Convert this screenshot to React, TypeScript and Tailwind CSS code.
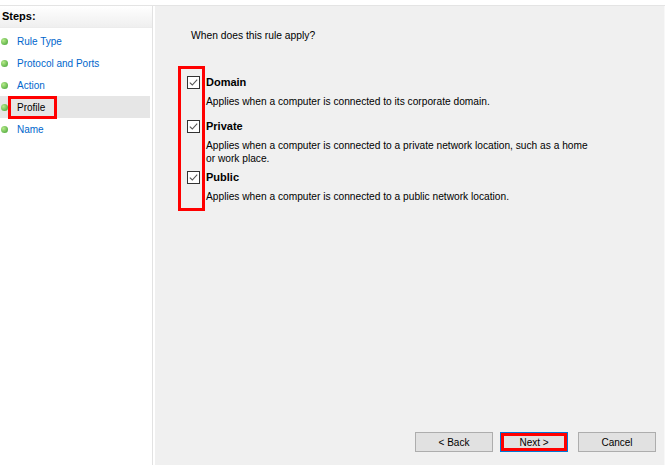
import React from 'react'

const steps = ['Rule Type', 'Protocol and Ports', 'Action', 'Profile', 'Name']

function CheckBox() {
  return (
    <span className="w-[13px] h-[13px] border border-[#333333] bg-white flex items-center justify-center shrink-0">
      <svg width="11" height="11" viewBox="0 0 11 11">
        <path d="M1.8 5.6 L4.3 8 L9.2 2.6" fill="none" stroke="#555555" strokeWidth="1.1" />
      </svg>
    </span>
  )
}

function Option({ label, lines, className }: { label: string; lines: string[]; className?: string }) {
  return (
    <div className={`flex items-start gap-[6px] ${className ?? ''}`}>
      <div className="h-[13px] flex items-center">
        <CheckBox />
      </div>
      <div>
        <p className="font-bold text-[11px] leading-[13px]">{label}</p>
        <div className="mt-[6px]">
          {lines.map((l) => (
            <p key={l} className="leading-[13px] text-[10.2px]">{l}</p>
          ))}
        </div>
      </div>
    </div>
  )
}

export default function App() {
  return (
    <div className="w-[665px] h-[465px] flex flex-col bg-white text-black text-[10px] overflow-hidden font-['Liberation_Sans',Arial,sans-serif]">
      {/* top strip */}
      <div className="h-[6px] border-b border-[#e4e4e4] shrink-0" />

      <div className="flex flex-1 min-h-0">
        {/* Steps panel */}
        <aside className="w-[153px] border-r border-[#e2e2e2] bg-white shrink-0">
          <div className="h-[22px] px-[2px] flex items-center font-bold text-[11px] bg-gradient-to-b from-white to-[#efefef] border-b border-[#ececec]">
            Steps:
          </div>
          <div className="mt-[2px] mr-[2px]">
            {steps.map((s) => {
              const active = s === 'Profile'
              return (
                <div key={s} className={`relative h-[22px] flex items-center ${active ? 'bg-[#e6e6e6]' : ''}`}>
                  <span className="ml-[1px] w-[7px] h-[7px] rounded-full bg-[radial-gradient(circle_at_35%_35%,#b6ea8a,#3d9e2f)]" />
                  <span className={`ml-[9px] ${active ? 'text-black' : 'text-[#0066cc]'}`}>{s}</span>
                  {active && (
                    <span className="absolute left-[8px] top-0 w-[49px] h-[23px] border-[3px] border-[#ff0000]" />
                  )}
                </div>
              )
            })}
          </div>
        </aside>

        <div className="w-[2px] bg-white shrink-0" />

        {/* Content */}
        <main className="flex-1 bg-[#f0f0f0] flex flex-col border-r border-[#f8f8f8]">
          <p className="pl-[36px] pt-[23px] leading-[13px] text-[10.3px]">When does this rule apply?</p>

          <div className="relative mt-[34px] pl-[32px]">
            <span className="absolute left-[23px] top-[-10px] w-[27px] h-[145px] border-[3px] border-[#ff0000]" />
            <Option label="Domain" lines={['Applies when a computer is connected to its corporate domain.']} />
            <Option
              className="mt-[12px]"
              label="Private"
              lines={[
                'Applies when a computer is connected to a private network location, such as a home',
                'or work place.',
              ]}
            />
            <Option
              className="mt-[6px]"
              label="Public"
              lines={['Applies when a computer is connected to a public network location.']}
            />
          </div>

          <div className="flex-1" />

          <div className="flex justify-end pr-[8px] pb-[13px]">
            <button className="w-[78px] h-[20px] bg-[#e1e1e1] border border-[#adadad]">&lt; Back</button>
            <button className="relative ml-[7px] w-[68px] h-[20px] bg-[#e1e1e1] border border-[#0078d7]">
              Next &gt;
              <span className="absolute inset-0 border-[3px] border-[#ff0000]" />
            </button>
            <button className="ml-[10px] w-[78px] h-[20px] bg-[#e1e1e1] border border-[#adadad]">Cancel</button>
          </div>
        </main>
      </div>
    </div>
  )
}
